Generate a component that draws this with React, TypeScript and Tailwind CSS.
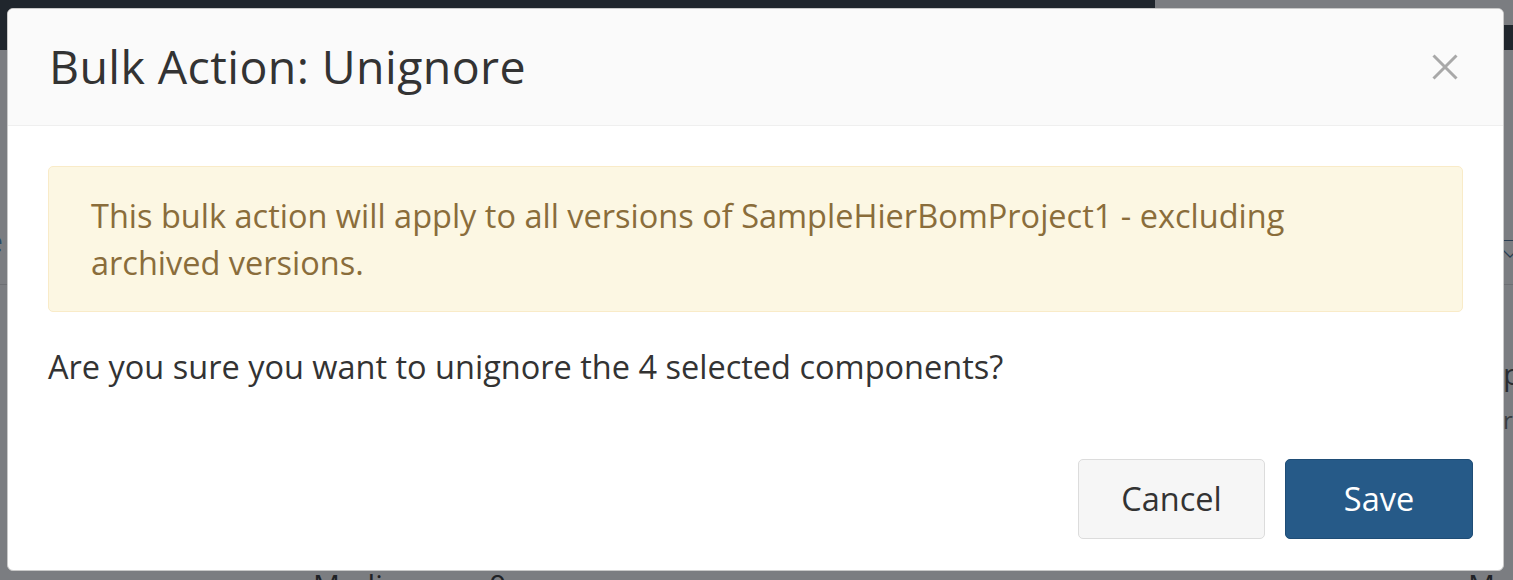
import React from 'react';

const font = { fontFamily: '"Open Sans", "Noto Sans", sans-serif' };

function Backdrop() {
  return (
    <div className="absolute inset-0 bg-[#7b7d81]">
      <div className="flex h-[50px]">
        <div className="flex-1 bg-[#20262d]" />
        <div className="w-[358px] flex flex-col">
          <div className="h-[25px]" />
          <div className="h-[25px] bg-[#20262d]" />
        </div>
      </div>
      <div className="flex justify-between h-[235px] border-b border-[#6d6f73]">
        <span className="mt-[168px] -ml-[14px] text-[30px] text-[#2b4a66]">e</span>
        <span className="mt-[180px] mr-[-6px] text-[24px] text-[#2b3e52]">⛉</span>
      </div>
      <div className="flex justify-end h-[285px] text-[30px] text-[#2a2d31]">
        <div className="flex flex-col items-start w-[10px] pt-[66px] leading-[46px]">
          <span>p</span>
          <span className="text-[24px] text-[#3a3d41]">r</span>
        </div>
      </div>
      <div className="flex text-[30px] text-[#1f2226] leading-none pl-[313px]">
        <span>Medium</span>
        <span className="ml-[60px]">0</span>
        <span className="ml-auto mr-[18px]">M</span>
      </div>
    </div>
  );
}

export default function App() {
  return (
    <div className="relative w-[1513px] h-[580px] overflow-hidden" style={font}>
      <Backdrop />
      <div className="absolute left-[7px] top-[8px] w-[1497px] h-[563px] bg-white rounded-[6px] border border-[#c9c9c9] overflow-hidden flex flex-col">
        <div className="h-[117px] shrink-0 bg-[#fafafa] border-b border-[#efefef] flex items-center justify-between pl-[41px] pr-[44px]">
          <h4 className="text-[46.5px] tracking-[0.4px] text-[#333]">Bulk Action: Unignore</h4>
          <button className="w-[28px] h-[28px] flex items-center justify-center">
            <svg width="26" height="26" viewBox="0 0 26 26">
              <path d="M1.5 1.5 L24.5 24.5 M24.5 1.5 L1.5 24.5" stroke="#a8a8a8" strokeWidth="3" />
            </svg>
          </button>
        </div>
        <div className="px-[40px] pt-[40px] pb-[40px]">
          <div className="bg-[#fcf7e3] border border-[#f9ebc8] rounded-[5px] px-[42px] py-[25px] text-[32.5px] leading-[47px] text-[#8a6d3b]">
            This bulk action will apply to all versions of SampleHierBomProject1 - excluding archived versions.
          </div>
          <p className="mt-[31px] text-[32.5px] leading-[47px] text-[#333]">
            Are you sure you want to unignore the 4 selected components?
          </p>
        </div>
        <div className="flex justify-end gap-[20px] pr-[30px] pt-[29px]">
          <button className="w-[187px] h-[80px] rounded-[5px] bg-[#f6f6f6] border border-[#dcdcdc] text-[32.5px] text-[#333]">
            Cancel
          </button>
          <button className="w-[188px] h-[80px] rounded-[5px] bg-[#265a88] border border-[#1f4d76] text-[32.5px] text-white">
            Save
          </button>
        </div>
      </div>
    </div>
  );
}
